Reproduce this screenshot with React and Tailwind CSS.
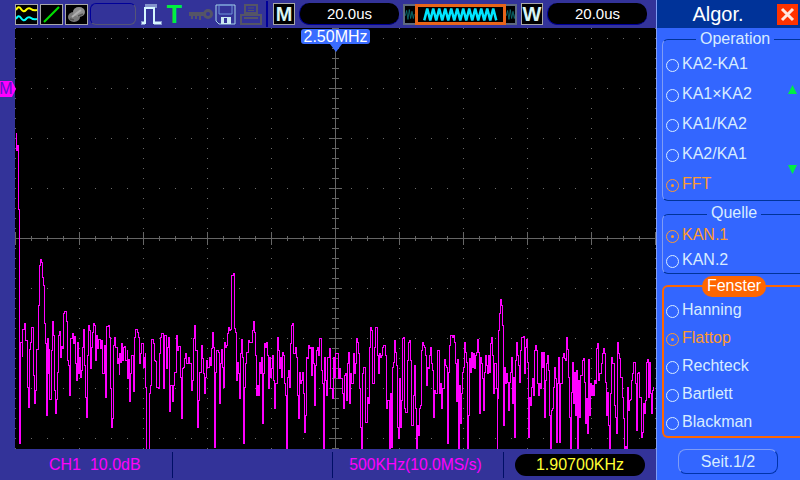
import React from 'react';

// traced from the scope display, "x,y" in 3x coordinates per 220px stretch
const traceA = `60,305 65,350 67,268 73,250 76,300 80,440 83,500 86,328 89,305 92,262 97,262 100,405 103,488 106,450 109,328 113,195 116,75 119,58 124,65 127,110 130,135 133,250 135,310 139,332 139,525 142,295 145,400 147,328 148,477 152,330 155,275 157,243 160,285 163,450 166,520 168,476 172,395 175,285 178,273 181,350 184,318 187,325 190,220 193,213 197,243 200,360 203,375 206,465 209,295 215,280 218,310 221,288 224,370 227,420 230,305 233,400 236,350 239,410 242,390 245,320 248,268 251,375 254,470 257,530 260,345 263,255 266,270 269,385 272,320 275,275 278,250 283,255 286,360 289,285 292,325 295,298 299,325 302,300 305,398 311,390 313,316 316,470 319,258 325,255 328,290 331,445 334,560 337,535 340,315 343,292 346,320 350,368 353,355 356,405 358,340 361,365 364,310 367,360 370,320 373,318 376,360 380,330 381,415 385,358 388,482 391,400 394,345 400,452 403,290 406,268 410,275 413,290 416,368 419,340 424,310 428,380 431,350 434,340 436,440 439,627 443,627 446,460 449,435 453,430 454,298 458,310 462,360 466,362 469,440 473,445 476,340 479,290 484,280 488,445 491,370 493,285 497,385 500,320 503,290 508,512 511,435 517,482 520,435 523,395 527,285 530,330 535,318 540,410 542,535 545,385 549,380 551,355 555,340 559,370 563,350 568,370 572,450 575,420 578,295 583,255 586,330 590,475 592,560 595,480 598,395 604,315 607,355 610,400 613,458 616,410 619,360 622,380 626,350 629,375 632,325 637,275 640,320 643,620 646,395 649,330 654,335 657,490`;
const traceB = `0,370 3,328 6,380 10,440 13,305 16,320 19,315 22,280 25,262 28,270 31,268 34,105 37,105 40,100 43,265 46,275 49,420 52,365 55,400 58,475 61,340 64,298 67,352 70,608 73,440 76,370 79,335 83,300 86,305 93,305 96,270 100,243 103,275 105,345 108,465 111,435 114,465 117,365 120,400 124,350 127,548 130,400 133,310 136,320 139,305 142,345 145,445 148,350 151,410 154,385 157,345 160,420 163,505 166,430 170,370 172,292 175,330 178,385 181,350 184,410 187,335 190,345 193,430 196,465 199,627 202,410 205,390 208,440 211,310 214,255 217,250 220,340 224,320 227,350 230,465 233,535 236,395 239,430 242,420 245,395 248,460 251,575 254,525 257,350 262,355 265,315 268,325 271,320 274,405 277,320 280,370 283,495 286,375 289,330 292,320 295,345 298,295 301,295 304,390 307,430 310,627 313,350 316,420 319,465 322,350 328,325 331,445 335,475 338,350 342,410 346,340 350,340 353,415 356,385 360,415 365,460 369,505 372,405 376,400 379,480 382,370 385,335 388,490 391,400 394,430 398,340 401,400 404,370 407,295 410,305 413,340 416,445 419,520 421,560 424,627 427,400 430,380 433,380 436,545 440,470 443,490 446,320 449,262 452,270 455,430 458,430 463,320 466,262 470,345 473,400 476,340 480,350 484,345 487,320 490,315 494,345 497,505 500,480 503,480 506,627 509,460 512,620 515,380 518,365 521,300 524,335 527,375 530,560 533,595 536,415 539,560 542,480 545,295 550,292 553,505 556,515 560,360 564,305 568,300 571,360 574,555 578,465 581,375 584,505 587,627 590,555 593,585 596,505 600,495 604,330 607,305 610,315 613,320 616,345 619,435 622,380 625,385 628,345 631,320 634,370 637,390 640,530 643,450 646,460 650,330 653,330 656,460`;
const traceC = `0,430 3,505 6,445 9,445 12,358 15,375 18,380 21,608 24,395 27,315 30,285 36,290 40,285 43,305 46,370 48,482 51,358 54,627 57,435 60,550 63,460 66,395 69,380 72,305 75,335 78,365 80,627 83,525 86,355 89,395 92,335 95,380 98,340 101,385 104,345 107,335 110,298 113,335 116,518 119,350 122,370 125,415 128,510 131,395 134,345 137,375 140,400 143,345 146,395 149,310 152,292 155,345 158,460 161,370 164,370 167,445 170,627 172,475 175,270 178,220 181,178 184,195 187,255 190,555 193,380 196,430 199,400 202,425 205,510 208,425 211,395 214,350 217,490 220,410 223,590 226,360 229,305 232,345 235,375 238,425 241,330 244,290 250,288 253,400 256,320 259,298 262,365 265,590 268,470 271,495 274,440 277,415 280,465 283,330 286,315 289,330 292,430 295,465 298,430 301,445 304,335 307,380 310,335 313,530 316,420 319,370 322,345 325,390 328,525 331,627 334,510 337,505 340,440 343,380 346,415 349,607 352,430 355,350 358,607 361,430 364,430 367,350 370,340 373,355 376,360 379,292 382,328 385,410 388,530 391,627 394,455 397,365 400,490 403,395 406,525 409,390 412,627 415,420 418,530 421,405 424,405 427,360 430,355 433,425 436,550 439,475 442,578 445,358 448,525 451,430 454,465 457,435 460,465 463,420 466,430 469,325 472,310 475,420 478,400 481,400 484,370 487,340 490,325 493,340 496,425 499,525 502,455 505,555 508,627 511,460 514,350 517,370 520,370 523,495 526,530 529,580 532,305 535,340 538,355 541,410 544,410 547,470 550,535 553,627 556,617 559,627 562,440 565,510 568,480 571,478 574,420 577,400 580,365 583,365 586,430 589,570 592,400 595,395 598,470 601,470 604,590 607,575 610,490 613,520 616,480 619,365 622,358 625,470 628,365 631,460 634,520 637,450 640,440`;

const toPath = (trace, offset) =>
  trace.split(' ').map((p) => {
    const [x, y] = p.split(',').map(Number);
    return `H${Math.round(offset + x / 3) + 0.5}V${Math.round(240 + y / 3)}`;
  }).join('');

const wavePath = 'M16.5 133V150H17.5V145H18.5V209H19.5V443' + toPath(traceA, 0) + toPath(traceB, 220) + toPath(traceC, 440);

const range = (n) => Array.from({ length: n }, (_, i) => i);

function Plot() {
  return (
    <svg viewBox="15 28 641 421" className="w-[641px] h-[421px] block bg-black" shapeRendering="crispEdges">
      {/* dotted graticule */}
      <g fill="#6a6a6a">
        {range(9).map((r) => range(41).map((c) => (
          <rect key={`r${r}-${c}`} x={15 + c * 16} y={38 + r * 50} width="1" height="1" />
        )))}
        {range(11).map((c) => range(43).map((r) => (
          <rect key={`c${c}-${r}`} x={15 + c * 64} y={28 + r * 10} width="1" height="1" />
        )))}
      </g>
      {/* centre cross */}
      <g fill="#666666">
        <rect x="15" y="238" width="641" height="1" />
        <rect x="335" y="28" width="1" height="421" />
        {range(41).map((c) => (
          <rect key={c} x={15 + c * 16} y={c % 4 === 0 ? 232 : 236} width="1" height={c % 4 === 0 ? 13 : 5} />
        ))}
        {range(43).map((r) => (
          <rect key={r} x={r % 5 === 1 ? 329 : 332} y={28 + r * 10} width={r % 5 === 1 ? 13 : 7} height="1" />
        ))}
      </g>
      <path d={wavePath} fill="none" stroke="#ff00ff" strokeWidth="1" />
    </svg>
  );
}

function IconBox({ children }) {
  return <div className="w-[23px] h-[21px] border border-[#a8a8a8] bg-black flex items-center justify-center shrink-0">{children}</div>;
}

function LetterBox({ children }) {
  return (
    <div className="w-[22px] h-[22px] border border-[#a8a8a8] bg-black shrink-0 flex items-center justify-center text-[#d8f4f4] text-[20px] font-bold leading-none">
      {children}
    </div>
  );
}

function TimePill() {
  return (
    <div className="w-[100px] h-[22px] rounded-[10px] bg-black border-b border-l border-[#000099] shrink-0 flex items-center justify-center text-white text-[15px] leading-none">
      20.0us
    </div>
  );
}

function Thumb() {
  let d = 'M0 16';
  for (let i = 0; i < 12; i++) d += `L${i * 7.2 + 3.6} 2L${i * 7.2 + 7.2} 16`;
  const side = 'M0 11L1.5 5L3 15L4.5 4L6 14L7.5 6L9 14L10 9';
  return (
    <div className="w-[114px] h-[21px] bg-black border-2 border-[#5f6a80] flex shrink-0">
      <svg viewBox="0 0 10 19" className="w-[10px] h-[17px]">
        <path d={side} fill="none" stroke="#0b6b70" strokeWidth="1" />
      </svg>
      <div className="w-[91px] h-[21px] -mt-[2px] border-[3px] border-[#e8651a] flex items-center justify-center">
        <svg viewBox="0 0 87 18" className="w-[85px] h-[15px]">
          <path d={d} fill="none" stroke="#00e5ff" strokeWidth="3" />
        </svg>
      </div>
      <svg viewBox="0 0 10 19" className="w-[10px] h-[17px]">
        <path d={side} fill="none" stroke="#0b6b70" strokeWidth="1" />
      </svg>
    </div>
  );
}

function TopBar() {
  return (
    <div className="h-7 bg-[#333399] flex items-center pl-[15px] shrink-0">
      <IconBox>
        <svg viewBox="0 0 21 19" className="w-[21px] h-[19px]">
          <path d="M0 5Q2.5 0 5 4T10 5T15 4T21 5" fill="none" stroke="#ffff00" strokeWidth="2" />
          <path d="M0 14Q2.5 9 5 13T10 14T15 13T21 14" fill="none" stroke="#00ffff" strokeWidth="2" />
        </svg>
      </IconBox>
      <div className="ml-[2px]">
        <IconBox>
          <svg viewBox="0 0 21 19" className="w-[21px] h-[19px]">
            <path d="M3 17L18 2" stroke="#00dd00" strokeWidth="2.2" />
          </svg>
        </IconBox>
      </div>
      <div className="ml-[2px]">
        <IconBox>
          <svg viewBox="0 0 21 19" className="w-[21px] h-[19px]">
            <ellipse cx="8" cy="12" rx="6" ry="5" fill="#7a7a7a" />
            <ellipse cx="13" cy="7" rx="6" ry="5" fill="#8e8e8e" />
            <path d="M6 12L11 8L15 5" fill="none" stroke="#b0b0b0" strokeWidth="2" />
            <path d="M4 14L8 15M12 11L17 9" fill="none" stroke="#555555" strokeWidth="1.5" />
          </svg>
        </IconBox>
      </div>
      <div className="w-[46px] h-[22px] ml-[2px] rounded-md border-t border-l border-[#000099] border-r-[#555577] border-b-[#555577] border-r border-b shrink-0" />
      <svg viewBox="0 0 22 22" className="w-[22px] h-[22px] ml-[5px] shrink-0">
        <path d="M1 20H4V5H13V20H20" fill="none" stroke="#d6f6ff" strokeWidth="2" />
        <path d="M5 1V5M7 1V5M9 1V5M11 1V5M13 1V5M15 1V5M1 22V18M3 22V18M14 22V18M16 22V18M18 22V18M20 22V18" stroke="#d6f6ff" strokeWidth="1" />
      </svg>
      <div className="w-[13px] ml-[5px] text-[#00f040] text-[25px] leading-none font-bold shrink-0 flex justify-center">T</div>
      <svg viewBox="0 0 24 14" className="w-[24px] h-[14px] ml-[8px] shrink-0">
        <path d="M0 5H16V9H12V13H10V9H8V12H6V9H4V12H2V9H0Z" fill="#555566" />
        <circle cx="19" cy="7" r="3.5" fill="none" stroke="#555566" strokeWidth="3" />
      </svg>
      <svg viewBox="0 0 21 21" className="w-[21px] h-[21px] ml-[2px] shrink-0">
        <path d="M1 1H20V20H4L1 17Z" fill="#333399" stroke="#a6d4e6" strokeWidth="1" />
        <path d="M4 1H17V10H4Z" fill="none" stroke="#6f95d8" strokeWidth="1" />
        <path d="M6 13H16V20H6Z" fill="#c8e8f0" />
        <path d="M9 14H12V19H9Z" fill="#333399" />
      </svg>
      <svg viewBox="0 0 22 21" className="w-[22px] h-[21px] ml-[4px] shrink-0">
        <path d="M5 1H17V9H5Z" fill="none" stroke="#555566" strokeWidth="2" />
        <path d="M8 4H14M8 6.5H14" stroke="#555566" strokeWidth="1" />
        <path d="M1 11H21V20H1Z" fill="none" stroke="#555566" strokeWidth="2" />
        <path d="M4 14H18" stroke="#555566" strokeWidth="2" />
      </svg>
      <div className="w-[2px] h-[26px] bg-[#000099] ml-[4px] shrink-0" />
      <div className="ml-[5px]"><LetterBox>M</LetterBox></div>
      <div className="ml-[4px]"><TimePill /></div>
      <div className="ml-[4px]"><Thumb /></div>
      <div className="ml-[4px]"><LetterBox>W</LetterBox></div>
      <div className="ml-[4px]"><TimePill /></div>
    </div>
  );
}

function BottomBar() {
  return (
    <div className="h-[31px] bg-[#333399] flex items-center shrink-0 text-base leading-none text-[#ff00ff]">
      <div className="w-[172px] h-[26px] flex items-center pl-[49px] whitespace-pre">CH1  10.0dB</div>
      <div className="w-[1px] h-[26px] bg-[#000f66]" />
      <div className="w-[159px]" />
      <div className="w-[1px] h-[26px] bg-[#000f66]" />
      <div className="w-[170px] pr-[5px] flex justify-center whitespace-nowrap text-[15.7px]">500KHz(10.0MS/s)</div>
      <div className="w-[1px] h-[26px] bg-[#000f66]" />
      <div className="ml-[11px] w-[130px] h-[22px] rounded-[11px] bg-black text-[#ffff33] flex items-center justify-center">1.90700KHz</div>
    </div>
  );
}

function Radio({ label, selected }) {
  return (
    <div className={`flex items-center h-full ${selected ? 'text-[#ff9a2e]' : 'text-[#d8ecff]'}`}>
      <span className={`w-[13px] h-[13px] rounded-full border flex items-center justify-center shrink-0 ${selected ? 'border-[#ff9a2e]' : 'border-[#d8ecff]'}`}>
        {selected && <span className="w-[3px] h-[3px] rounded-full bg-[#ff9a2e]" />}
      </span>
      <span className="ml-[3px] pb-[3px] text-base leading-none whitespace-nowrap">{label}</span>
    </div>
  );
}

function SidePanel() {
  return (
    <aside className="w-36 h-full bg-[#3366ff] border-l border-[#7f9cf5] overflow-hidden shrink-0 flex flex-col">
      <div className="h-7 bg-[#003399] flex items-center shrink-0">
        <div className="w-[120px] pl-[2px] text-center text-white text-xl leading-none">Algor.</div>
        <div className="w-[21px] h-[21px] bg-[#ff3300] flex items-center justify-center">
          <svg viewBox="0 0 15 15" className="w-[15px] h-[15px]">
            <path d="M2 2L13 13M13 2L2 13" stroke="#ffe8e0" strokeWidth="3" />
          </svg>
        </div>
      </div>

      <div className="relative w-[150px] h-[162px] ml-[5px] mt-[11px] shrink-0 border-t border-b border-[#003399] border-l border-l-[#7f9cf5] rounded-l-md pt-[10px] pl-[3px]">
        <div className="absolute -top-[10px] left-[33px] px-[4px] bg-[#3366ff] text-[#d8ecff] text-base leading-[18px]">Operation</div>
        {['KA2-KA1', 'KA1×KA2', 'KA1/KA2', 'KA2/KA1'].map((l) => (
          <div key={l} className="h-[30px]"><Radio label={l} /></div>
        ))}
        <div className="h-[30px]"><Radio label="FFT" selected /></div>
        <svg viewBox="0 0 9 9" className="absolute top-[45px] left-[125px] w-[9px] h-[9px]"><path d="M4.5 0L9 9H0Z" fill="#00ee44" /></svg>
        <svg viewBox="0 0 9 9" className="absolute top-[125px] left-[125px] w-[9px] h-[9px]"><path d="M0 0H9L4.5 9Z" fill="#00ee44" /></svg>
      </div>

      <div className="relative w-[150px] h-[60px] ml-[5px] mt-[13px] shrink-0 border-t border-b border-[#003399] border-l border-l-[#7f9cf5] rounded-l-md pt-[9px] pl-[3px]">
        <div className="absolute -top-[11px] left-[44px] px-[4px] bg-[#3366ff] text-[#d8ecff] text-base leading-[18px]">Quelle</div>
        <div className="h-[25px]"><Radio label="KAN.1" selected /></div>
        <div className="h-[25px]"><Radio label="KAN.2" /></div>
      </div>

      <div className="relative w-[150px] h-[153px] ml-[5px] mt-[11px] shrink-0 border-y-2 border-l-2 border-[#ff6600] rounded-l-md pt-[10px] pl-[2px]">
        <div className="absolute -top-[11px] left-[38px] w-[64px] h-[21px] rounded-[10px] bg-[#ff6600] text-white text-base leading-none flex items-center justify-center pb-[2px]">Fenster</div>
        {['Hanning', 'Flattop', 'Rechteck', 'Bartlett', 'Blackman'].map((l) => (
          <div key={l} className="h-[28px]"><Radio label={l} selected={l === 'Flattop'} /></div>
        ))}
      </div>

      <div className="w-[100px] h-[25px] ml-[21px] mt-[11px] shrink-0 rounded-lg border-t border-l border-[#7f9cf5] border-r border-b border-r-[#0033aa] border-b-[#0033aa] flex items-center justify-center text-[#d8ecff] text-base leading-none">
        Seit.1/2
      </div>
    </aside>
  );
}

export default function App() {
  return (
    <div className="relative w-[800px] h-[480px] flex overflow-hidden bg-[#333399] font-['Liberation_Sans',Arial,sans-serif]">
      <div className="w-[656px] h-full flex flex-col shrink-0">
        <TopBar />
        <div className="flex h-[421px] shrink-0">
          <div className="w-[15px] shrink-0" />
          <Plot />
        </div>
        <BottomBar />
      </div>
      <SidePanel />

      {/* frequency marker */}
      <div className="absolute left-[301px] top-[29px] w-[69px] h-[15px] rounded-[3px] bg-[#3a6cff] text-white text-base leading-none flex items-center justify-center">2.50MHz</div>
      <svg viewBox="0 0 12 8" className="absolute left-[330px] top-[44px] w-[12px] h-[8px]"><path d="M0 0H12L6 8Z" fill="#3a6cff" /></svg>

      {/* math channel marker */}
      <div className="absolute left-0 top-[81px] w-[12px] h-[16px] bg-[#ff00ff] text-[#5a14c8] text-[16px] leading-none flex items-center justify-center">M</div>
      <svg viewBox="0 0 4 16" className="absolute left-[12px] top-[81px] w-[4px] h-[16px]"><path d="M0 0L4 8L0 16Z" fill="#ff00ff" /></svg>
    </div>
  );
}
